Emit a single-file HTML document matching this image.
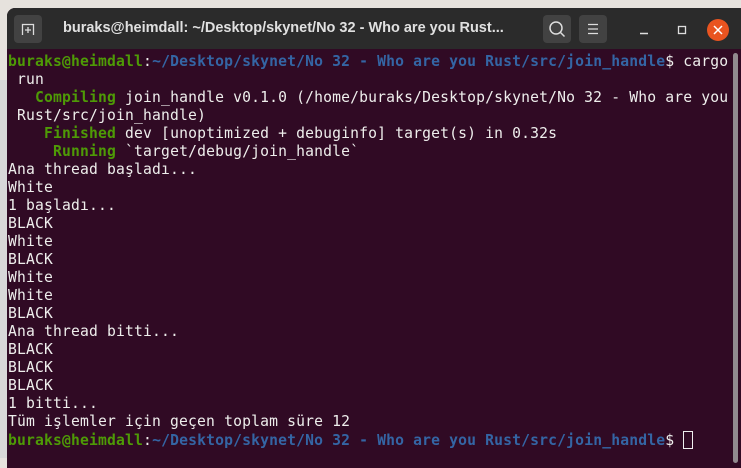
<!DOCTYPE html>
<html><head><meta charset="utf-8"><style>
body{margin:0;width:741px;height:458px;overflow:hidden;background:#e6e2dd;position:relative;font-family:"Liberation Sans","DejaVu Sans",sans-serif}
#left{position:absolute;left:0;top:80px;width:8px;height:378px;background:#d8d8d8}
#win{position:absolute;left:7px;top:8px;width:740px;height:460px;background:#300a24;border-radius:8px 8px 0 0;overflow:hidden}
#tb{position:absolute;left:0;top:0;width:100%;height:41px;background:#2b2b2b}
.btn{position:absolute;top:7px;width:28px;height:28px;background:#424242;border-radius:4px}
#title{position:absolute;left:56px;top:12px;color:#e0e0e0;font-weight:bold;font-size:14.5px;font-family:"Liberation Sans",sans-serif;white-space:nowrap}
pre{position:absolute;left:1px;top:45px;margin:0;font-family:"DejaVu Sans Mono","Liberation Mono",monospace;font-size:14.7px;letter-spacing:0.16px;line-height:18px;color:#eeeeec}
.g{color:#4e9a06;font-weight:bold}.b{color:#3465a4;font-weight:bold}
#sb{position:absolute;left:726px;top:45px;width:5px;height:410px;background:#aaa;border-radius:3px;opacity:.8}
</style></head><body>
<div id="left"></div>
<div id="win">
<div id="tb">
<div class="btn" style="left:7px"><svg width="28" height="28" viewBox="0 0 28 28"><path d="M8.5 20V9.5h11V20M14 12v6M11 15h6" stroke="#ddd" stroke-width="1.3" fill="none"/></svg></div>
<div id="title">buraks@heimdall: ~/Desktop/skynet/No 32 - Who are you Rust...</div>
<div class="btn" style="left:536px"><svg width="28" height="28"><circle cx="13" cy="13" r="6" stroke="#ddd" stroke-width="1.5" fill="none"/><path d="M17.5 17.5l4 4" stroke="#ddd" stroke-width="1.5"/></svg></div>
<div class="btn" style="left:572px"><svg width="28" height="28"><path d="M9 9.5h10M9 14h10M9 18.5h10" stroke="#ddd" stroke-width="1.3"/></svg></div>
<svg style="position:absolute;left:620px;top:10px" width="110" height="24"><path d="M13 15.5h8" stroke="#ddd" stroke-width="1.5"/><rect x="51.5" y="8.5" width="7" height="7" stroke="#ddd" stroke-width="1.3" fill="none"/><circle cx="91" cy="12" r="11" fill="#e95420"/><path d="M87 8l8 8M95 8l-8 8" stroke="#fff" stroke-width="1.5"/></svg>
</div>
<div id="sb"></div>
<pre><span class="g">buraks@heimdall</span>:<span class="b">~/Desktop/skynet/No 32 - Who are you Rust/src/join_handle</span>$ cargo
 run
   <span class="g">Compiling</span> join_handle v0.1.0 (/home/buraks/Desktop/skynet/No 32 - Who are you
 Rust/src/join_handle)
    <span class="g">Finished</span> dev [unoptimized + debuginfo] target(s) in 0.32s
     <span class="g">Running</span> `target/debug/join_handle`
Ana thread başladı...
White
1 başladı...
BLACK
White
BLACK
White
White
BLACK
Ana thread bitti...
BLACK
BLACK
BLACK
1 bitti...
Tüm işlemler için geçen toplam süre 12
<span class="g">buraks@heimdall</span>:<span class="b">~/Desktop/skynet/No 32 - Who are you Rust/src/join_handle</span>$ <span style="display:inline-block;width:8px;height:16px;border:1px solid #eee;vertical-align:-4px"></span></pre>
</div>
</body></html>
